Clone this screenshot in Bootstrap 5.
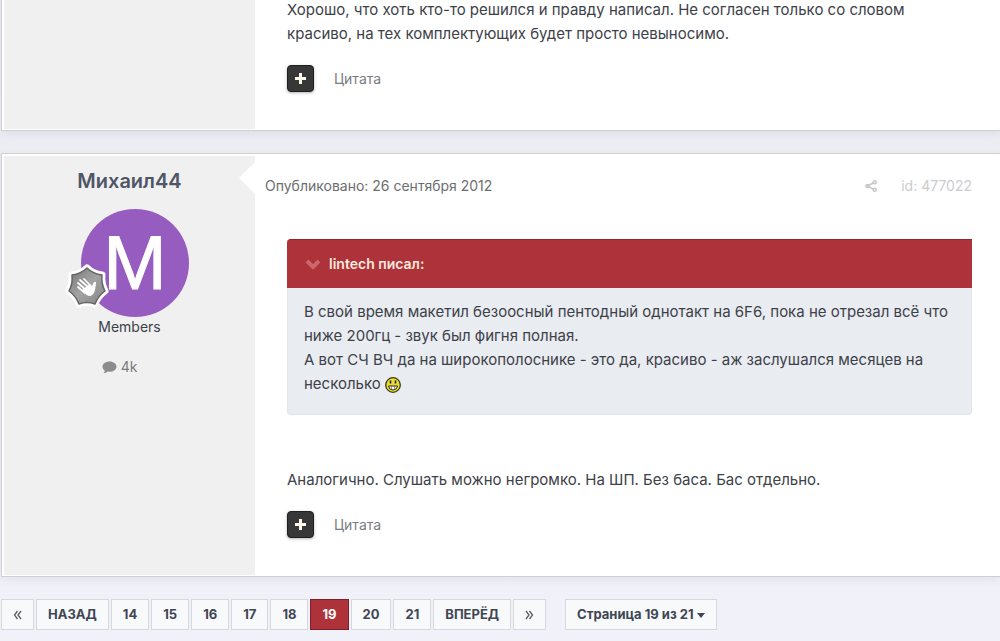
<!DOCTYPE html>
<html lang="ru">
<head>
<meta charset="utf-8">
<meta name="viewport" content="width=device-width, initial-scale=1">
<title>Форум</title>
<link href="https://cdn.jsdelivr.net/npm/bootstrap@5.3.0/dist/css/bootstrap.min.css" rel="stylesheet">
<style>
body{font-family:Inter,"Noto Sans",sans-serif;font-size:15px;line-height:24px;color:#3d4148;background:linear-gradient(#ebebf2,#f1f2f9) fixed;overflow:hidden}
a{text-decoration:none;color:inherit}
.topic{padding-left:1px;min-height:100vh}
.post{background:#fff;border:1px solid #cfcfd5;border-right:0;padding:2px 0 1px 2px;margin-bottom:22px;box-shadow:0 3px 8px rgba(40,40,60,.07)}
.post-cut{margin-top:-24px}
.author{width:251px;background:#f0f0f0;padding-top:13px}
.author-name{font-size:20px;line-height:24px;font-weight:600;color:#4f5666}
.avatar{width:108px;height:108px;margin:16px 0 0 11px;border-radius:50%;background:#975cc0;color:#fff;font:76px/108px "Liberation Sans",sans-serif;-webkit-text-stroke:1px #fff}
.rank{position:absolute;left:-16px;bottom:7px}
.muted{color:#7a7c7f;font-size:14px}
.small-text{font-size:14px;line-height:20px}
.posts-count{margin-left:-20px}
.pointer{position:absolute;left:-16px;top:6px;border:solid transparent;border-width:16px 16px 16px 0;border-right-color:#fff}
.post-head{padding:18px 28px 0 10px;font-size:14px;line-height:24px;color:#6c6e71}
.post-head .faint{color:#cbcccf}
.post-body{padding:0 28px 37px 32px}
.post-cut .post-body{padding-top:19px}
.quote{margin:41px 0 53px;background:#e9ecf1;border-radius:4px;border:1px solid #e2e5ea;border-top:0}
.quote-head{margin:0 -1px;background:#ae3239;border-top:1px solid #8d262d;border-radius:4px 0 0 0;height:49px;padding-left:18px;color:#f9e9df;font-size:14px;font-weight:600}
.quote-body{padding:12px 16px 18px}
.add{width:27px;height:27px;background:#373737;border:1px solid #1f1f1f;border-radius:4px;box-shadow:0 1px 3px rgba(0,0,0,.3)}
.actions{margin-top:19px}
.pager{gap:2px;font-size:13px;font-weight:700;line-height:29px;color:#3f4654}
.pager a,.pager button{padding:0 11px;background:#f8f9fa;border:1px solid #d5d9de;color:inherit;font-weight:inherit}
.pager .current{background:#ae3239;border-color:#7f2028;color:#fff}
.pager button{margin-left:17px}
</style>
</head>
<body>
<main class="topic">
<article class="post post-cut d-flex">
  <aside class="author flex-shrink-0"></aside>
  <div class="post-body flex-grow-1">
    <p class="mb-0">Хорошо, что хоть кто-то решился и правду написал. Не согласен только со словом<br>красиво, на тех комплектующих будет просто невыносимо.</p>
    <div class="actions d-flex align-items-center">
      <button class="add p-0 d-flex align-items-center justify-content-center" type="button" aria-label="Мультицитата"><svg width="13" height="13" viewBox="0 0 13 13"><path d="M5 1h3v4h4v3H8v4H5V8H1V5h4z" fill="#fff8ea"/></svg></button>
      <a href="#" class="muted ms-3 ps-1">Цитата</a>
    </div>
  </div>
</article>

<article class="post d-flex">
  <aside class="author flex-shrink-0 d-flex flex-column align-items-center">
    <a href="#" class="author-name">Михаил44</a>
    <div class="avatar position-relative text-center">М
      <svg class="rank" width="44" height="46" viewBox="0 0 44 46"><defs><linearGradient id="steel" x1="0" y1="0" x2="1" y2="1"><stop offset="0" stop-color="#777"/><stop offset=".5" stop-color="#a3a3a3"/><stop offset="1" stop-color="#858585"/></linearGradient></defs>
      <g stroke-linejoin="round"><path d="M22 4Q28 10 37 11Q36 20 40 27Q33 32 30 40Q22 37 14 40Q11 32 4 27Q8 20 7 11Q16 10 22 4Z" fill="#fff" stroke="#fff" stroke-width="7"/>
      <path d="M22 4Q28 10 37 11Q36 20 40 27Q33 32 30 40Q22 37 14 40Q11 32 4 27Q8 20 7 11Q16 10 22 4Z" fill="url(#steel)" stroke="#666" stroke-width="1.500"/></g>
      <path d="M13 23l7 6M13 19l8 7M15 16l8 7M19 15l6 6" fill="none" stroke="#fff" stroke-width="1.700" stroke-linecap="round"/><path d="M17 26l8-6 2 2 2-4q2-1 2 1l-1 7q-1 5-5 6-4 0-8-6z" fill="#fff"/></svg>
    </div>
    <div class="small-text">Members</div>
    <div class="small-text posts-count d-flex align-items-center mt-3 pt-1 muted"><svg class="me-1" width="15" height="13" viewBox="0 0 15 13"><path d="M7.500 0.500C3.500 0.500.5 2.800.5 5.700c0 1.600 1 3 2.400 4-.2 1.100-.8 1.900-1.600 2.600 1.800 0 3.300-.7 4.300-1.700 5 .7 8.900-1.600 8.900-4.900 0-2.900-3-5.200-7-5.200z" fill="#8c8c8c"/></svg>4k</div>
  </aside>
  <div class="flex-grow-1 position-relative">
    <span class="pointer"></span>
    <div class="post-head d-flex justify-content-between">
      <a href="#">Опубликовано: 26 сентября 2012</a>
      <span class="faint d-flex align-items-center"><a href="#" aria-label="Поделиться" class="d-flex me-4"><svg width="12" height="12" viewBox="0 0 12 12" fill="none" stroke="#c9c9cc" stroke-width="1.600"><path d="M9.500 2.300L2.500 6l7 3.700"/><circle cx="2.500" cy="6" r="1.500" fill="#c9c9cc"/><circle cx="9.700" cy="2.300" r="1.500" fill="#fff"/><circle cx="9.700" cy="9.700" r="1.500" fill="#fff"/></svg></a><a href="#">id: 477022</a></span>
    </div>
    <div class="post-body">
      <blockquote class="quote">
        <div class="quote-head d-flex align-items-center"><svg class="me-2" width="16" height="12" viewBox="0 0 16 12"><path d="M2 3l6 6 6-6" fill="none" stroke="#cb666c" stroke-width="4"/></svg>lintech писал:</div>
        <div class="quote-body">В свой время макетил безоосный пентодный однотакт на 6F6, пока не отрезал всё что ниже 200гц - звук был фигня полная.<br>А вот СЧ ВЧ да на широкополоснике - это да, красиво - аж заслушался месяцев на несколько <svg width="16" height="16" viewBox="0 0 16 16" role="img" aria-label="Смайлик"><circle cx="8" cy="8" r="7.300" fill="#e9dc32" stroke="#3c3a18" stroke-width="1.300"/><path d="M5.500 3.500v3M10.500 3.500v3" stroke="#222" stroke-width="1.600"/><path d="M3.500 9h9q-.5 4-4.500 4T3.500 9z" fill="#fff" stroke="#2b2a12"/><path d="M6.500 9v4M9.500 9v4" stroke="#5a5836" stroke-width=".6"/></svg></div>
      </blockquote>
      <p class="mb-0">Аналогично. Слушать можно негромко. На ШП. Без баса. Бас отдельно.</p>
      <div class="actions d-flex align-items-center">
        <button class="add p-0 d-flex align-items-center justify-content-center" type="button" aria-label="Мультицитата"><svg width="13" height="13" viewBox="0 0 13 13"><path d="M5 1h3v4h4v3H8v4H5V8H1V5h4z" fill="#fff8ea"/></svg></button>
        <a href="#" class="muted ms-3 ps-1">Цитата</a>
      </div>
    </div>
  </div>
</article>

<nav class="pager d-flex" aria-label="Страницы">
  <a href="#" aria-label="Первая"><svg width="9" height="10" viewBox="0 0 9 10" fill="none" stroke="#59605f" stroke-width="1.300"><path d="M4.500 1l-3 4 3 4M8 1L5 5l3 4"/></svg></a>
  <a href="#">НАЗАД</a><a href="#">14</a><a href="#">15</a><a href="#">16</a><a href="#">17</a><a href="#">18</a><a href="#" class="current" aria-current="page">19</a><a href="#">20</a><a href="#">21</a><a href="#">ВПЕРЁД</a>
  <a href="#" aria-label="Последняя"><svg width="9" height="10" viewBox="0 0 9 10" fill="none" stroke="#59605f" stroke-width="1.300"><path d="M1 1l3 4-3 4M4.500 1l3 4-3 4"/></svg></a>
  <button type="button">Страница 19 из 21 <svg width="8" height="5" viewBox="0 0 8 5"><path d="M0 0h8L4 5z" fill="#3f4654"/></svg></button>
</nav>
</main>
<script src="https://cdn.jsdelivr.net/npm/bootstrap@5.3.0/dist/js/bootstrap.bundle.min.js"></script>
</body>
</html>
